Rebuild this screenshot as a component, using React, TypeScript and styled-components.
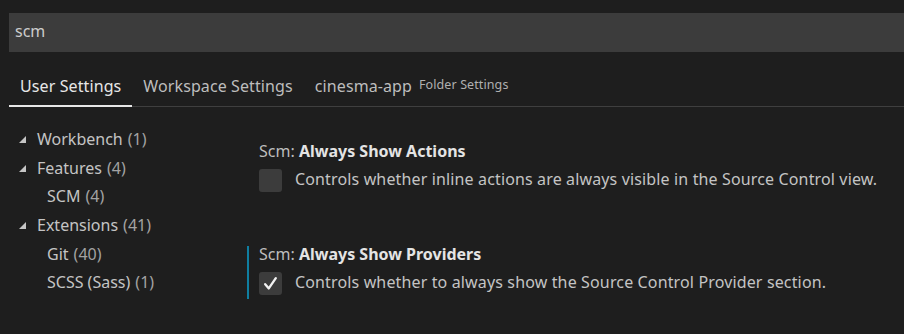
import React from 'react';
import styled, { createGlobalStyle } from 'styled-components';

const GlobalStyle = createGlobalStyle`
	html, body {
		margin: 0;
		padding: 0;
		background: #1e1e1e;
	}
	body {
		font-family: 'Noto Sans', 'Open Sans', sans-serif;
		color: #cccccc;
	}
`;

type TreeItem = { label: string; count: number; child?: boolean };

const tree: TreeItem[] = [
	{ label: 'Workbench', count: 1 },
	{ label: 'Features', count: 4 },
	{ label: 'SCM', count: 4, child: true },
	{ label: 'Extensions', count: 41 },
	{ label: 'Git', count: 40, child: true },
	{ label: 'SCSS (Sass)', count: 1, child: true },
];

const settings = [
	{
		key: 'Always Show Actions',
		desc: 'Controls whether inline actions are always visible in the Source Control view.',
		checked: false,
	},
	{
		key: 'Always Show Providers',
		desc: 'Controls whether to always show the Source Control Provider section.',
		checked: true,
	},
];

const Twistie = () => (
	<TwistieSvg viewBox='0 0 7 7' width='7' height='7'>
		<polygon points='0,7 7,7 7,0' fill='#c5c5c5' />
	</TwistieSvg>
);

const Check = () => (
	<svg viewBox='0 0 16 16' width='17' height='17'>
		<path d='M3 8.6 L6.4 12.6 L13 3' fill='none' stroke='#f2f2f2' strokeWidth='2.2' strokeLinecap='round' strokeLinejoin='round' />
	</svg>
);

function App() {
	return (
		<Page>
			<GlobalStyle />
			<SearchBox>scm</SearchBox>
			<TabBar>
				<Tab active>User Settings</Tab>
				<Tab>Workspace Settings</Tab>
				<Tab>
					cinesma-app<FolderHint>Folder Settings</FolderHint>
				</Tab>
			</TabBar>
			<Body>
				<Tree>
					{tree.map((item) => (
						<TreeRow key={item.label} child={item.child}>
							{!item.child && <Twistie />}
							<span>{item.label}</span>
							<Count>({item.count})</Count>
						</TreeRow>
					))}
				</Tree>
				<Settings>
					{settings.map((s) => (
						<Setting key={s.key} focused={s.checked}>
							<Title>
								Scm: <strong>{s.key}</strong>
							</Title>
							<Row>
								<Checkbox>{s.checked && <Check />}</Checkbox>
								<Desc>{s.desc}</Desc>
							</Row>
						</Setting>
					))}
				</Settings>
			</Body>
		</Page>
	);
}

const Page = styled.div`
	width: 904px;
	height: 334px;
	overflow: hidden;
	padding-top: 13px;
	box-sizing: border-box;
`;

const SearchBox = styled.div`
	margin-left: 9px;
	height: 39px;
	line-height: 37px;
	background: #3c3c3c;
	padding-left: 6px;
	font-size: 16px;
	color: #cccccc;
`;

const TabBar = styled.div`
	display: flex;
	margin: 14px 0 0 9px;
	border-bottom: 1px solid #3f3f3f;
`;

const Tab = styled.div<{ active?: boolean }>`
	display: flex;
	align-items: center;
	height: 39px;
	padding: 0 11px;
	margin-bottom: -1px;
	font-size: 16px;
	letter-spacing: 0.1px;
	color: ${(p) => (p.active ? '#e7e7e7' : '#bdbdbd')};
	border-bottom: 2px solid ${(p) => (p.active ? '#e7e7e7' : 'transparent')};
`;

const FolderHint = styled.span`
	font-size: 12.5px;
	color: #b0b0b0;
	margin-left: 7px;
	margin-top: -2px;
`;

const Body = styled.div`
	display: flex;
`;

const Tree = styled.div`
	width: 247px;
	padding-top: 18px;
`;

const TreeRow = styled.div<{ child?: boolean }>`
	display: flex;
	align-items: center;
	height: 28.6px;
	padding-left: ${(p) => (p.child ? '47px' : '19px')};
	font-size: 16px;
	color: #c4c4c4;
`;

const TwistieSvg = styled.svg`
	margin-right: 11px;
	margin-top: 1px;
`;

const Count = styled.span`
	color: #a3a3a3;
	margin-left: 5px;
`;

const Settings = styled.div`
	display: flex;
	flex-direction: column;
	gap: 50px;
	padding-top: 36px;
`;

const Setting = styled.div<{ focused?: boolean }>`
	padding: 0 0 4px 10px;
	border-left: 2px solid ${(p) => (p.focused ? '#0f7ea0' : 'transparent')};
`;

const Title = styled.div`
	font-size: 16px;
	line-height: 16px;
	color: #bdbdbd;

	strong {
		color: #e4e4e4;
		font-weight: 700;
	}
`;

const Row = styled.div`
	display: flex;
	align-items: center;
	margin-top: 10px;
`;

const Checkbox = styled.div`
	display: flex;
	align-items: center;
	justify-content: center;
	width: 23px;
	height: 23px;
	border-radius: 3px;
	background: #3c3c3c;
	margin-right: 13px;
	flex-shrink: 0;
`;

const Desc = styled.div`
	font-size: 16px;
	letter-spacing: 0.14px;
	color: #c4c4c4;
	margin-top: -4px;
`;

export default App;
